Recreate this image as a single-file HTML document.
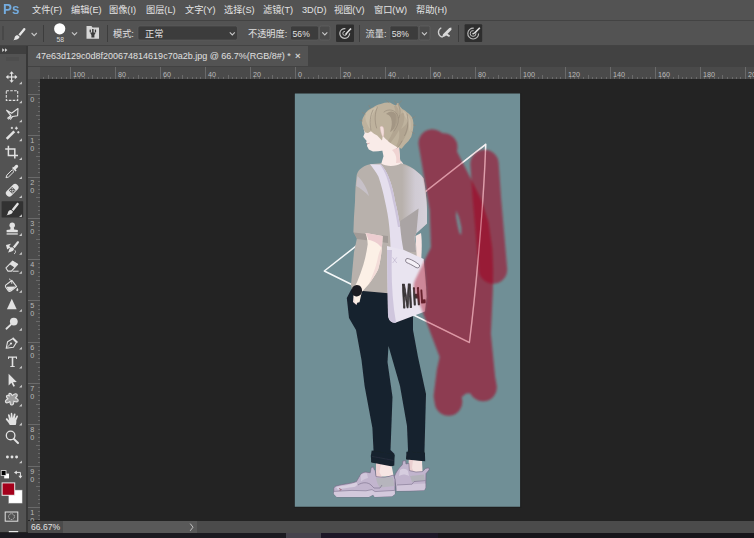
<!DOCTYPE html>
<html><head><meta charset="utf-8"><title>Ps</title>
<style>
html,body{margin:0;padding:0;}
body{width:754px;height:538px;overflow:hidden;background:#232323;position:relative;font-family:"Liberation Sans","Noto Sans CJK SC",sans-serif;}
.abs{position:absolute;}
#menubar{left:0;top:0;width:754px;height:20px;background:#535353;}
#menubar .ps{position:absolute;left:3px;top:1px;font-size:14.8px;line-height:17px;font-weight:bold;color:#74acdf;transform:scaleX(0.9);transform-origin:0 0;}
#menubar span.m{position:absolute;top:3px;font-size:9.2px;color:#e4e4e4;white-space:nowrap;line-height:14px;}
#optbar{left:0;top:20px;width:754px;height:26px;background:#535353;}
#optline{left:0;top:20px;width:754px;height:1px;background:#434343;}
#optline2{left:0;top:45px;width:754px;height:1px;background:#434343;}
.ol{position:absolute;top:7px;font-size:9.2px;line-height:14px;color:#e0e0e0;white-space:nowrap;}
#tabbar{left:0;top:46px;width:754px;height:21px;background:#424242;}
#tab{left:28px;top:46px;width:280px;height:20px;background:#535353;color:#e0e0e0;font-size:9px;line-height:20px;white-space:nowrap;}
#tools{left:0;top:46px;width:26px;height:486px;background:#535353;}
#toolhead{left:0;top:46px;width:26px;height:8px;background:#3f3f3f;}
#tsep{left:26px;top:46px;width:2px;height:486px;background:#383838;}
#status{left:28px;top:520.5px;width:726px;height:12px;background:#4b4b4b;}
#bottom{left:0;top:532.6px;width:754px;height:6px;background:#1b1a20;}
.tk{stroke:#6a6a6a;stroke-width:1;shape-rendering:crispEdges;}
.rl{font-size:7.2px;fill:#bababa;font-family:"Liberation Sans",sans-serif;}
</style></head><body>
<div id="menubar" class="abs">
<span class="ps">Ps</span>
<span class="m" style="left:32px">文件(F)</span>
<span class="m" style="left:71px">编辑(E)</span>
<span class="m" style="left:109px">图像(I)</span>
<span class="m" style="left:146px">图层(L)</span>
<span class="m" style="left:185px">文字(Y)</span>
<span class="m" style="left:224px">选择(S)</span>
<span class="m" style="left:263px">滤镜(T)</span>
<span class="m" style="left:302px">3D(D)</span>
<span class="m" style="left:334px">视图(V)</span>
<span class="m" style="left:374px">窗口(W)</span>
<span class="m" style="left:416px">帮助(H)</span>
</div>
<div id="optbar" class="abs"><!-- options bar; coordinates relative to optbar (page y = 20 + top) -->
<svg style="position:absolute;left:0;top:0" width="754" height="26" viewBox="0 20 754 26">
<!-- grip -->
<g fill="#444">
<rect x="2" y="26" width="2" height="14" fill="#484848"/>
</g>
<g stroke="#3d3d3d" stroke-width="1" shape-rendering="crispEdges">
<line x1="43.5" y1="25" x2="43.5" y2="42"/>
<line x1="107.5" y1="25" x2="107.5" y2="42"/>
<line x1="359.5" y1="25" x2="359.5" y2="42"/>
<line x1="458.5" y1="25" x2="458.5" y2="42"/>
</g>
<!-- brush icon -->
<g id="brushic" fill="#e6e6e6">
<path d="M24.8 28.2 C25.6 28.6 25.6 29.4 25.2 30 L20.2 36 L18.4 34.6 L23.4 28.6 C23.8 28.1 24.4 28 24.8 28.2 Z"/>
<path d="M17.8 35.2 L19.6 36.7 C19.3 38.4 17.6 39.6 15.6 39.8 C14.6 39.9 13.8 40.2 13.4 40.4 C14.4 39.2 14.4 38.2 14.8 37 C15.3 35.7 16.6 35 17.8 35.2 Z"/>
</g>
<!-- chevrons -->
<g fill="none" stroke="#c8c8c8" stroke-width="1.1">
<polyline points="31.6,33 34.2,35.6 36.8,33"/>
<polyline points="71.9,32.4 74.5,35 77.1,32.4"/>
<polyline points="229.8,32.4 232.3,34.9 234.8,32.4"/>
<polyline points="322.3,32.4 324.8,34.9 327.3,32.4"/>
<polyline points="421.9,32.4 424.4,34.9 426.9,32.4"/>
</g>
<!-- brush preset circle -->
<circle cx="59.7" cy="28.8" r="5.6" fill="#ffffff"/>
<text x="60.3" y="42" text-anchor="middle" font-size="6.8" fill="#d8d8d8" font-family="Liberation Sans, sans-serif">58</text>
<!-- folder/brush panel icon -->
<g>
<path d="M86.5 26 H91.5 L92.5 27.4 H99 V38.8 H86.5 Z" fill="#d6d6d6"/>
<g fill="#3a3a3a">
<rect x="92.1" y="29" width="1.5" height="5"/>
<rect x="89.6" y="29.6" width="1.3" height="2.6"/>
<rect x="94.8" y="29.6" width="1.3" height="2.6"/>
<path d="M90 32.4 L95.8 32.4 L94.4 35 L94.4 37.6 L91.4 37.6 L91.4 35 Z"/>
</g>
</g>
<!-- mode dropdown -->
<rect x="138" y="26" width="99.5" height="14" rx="2" fill="#3c3c3c" stroke="#5e5e5e" stroke-width="0.6"/>
<!-- opacity input -->
<rect x="290.5" y="26" width="28" height="14" rx="1.5" fill="#3c3c3c" stroke="#5e5e5e" stroke-width="0.6"/>
<rect x="319.6" y="26" width="10.4" height="14" rx="1.5" fill="#4a4a4a" stroke="#646464" stroke-width="0.6"/>
<!-- flow input -->
<rect x="390" y="26" width="28.4" height="14" rx="1.5" fill="#3c3c3c" stroke="#5e5e5e" stroke-width="0.6"/>
<rect x="419.2" y="26" width="10.8" height="14" rx="1.5" fill="#4a4a4a" stroke="#646464" stroke-width="0.6"/>
<!-- redraw chevrons over boxes -->
<g fill="none" stroke="#c8c8c8" stroke-width="1.1">
<polyline points="229.8,32.4 232.3,34.9 234.8,32.4"/>
<polyline points="322.3,32.4 324.8,34.9 327.3,32.4"/>
<polyline points="421.9,32.4 424.4,34.9 426.9,32.4"/>
</g>
<!-- pressure buttons -->
<rect x="336" y="24.4" width="18" height="17.6" rx="1" fill="#2e2e2e"/>
<g fill="none" stroke="#c4c4c4" stroke-width="1.2">
<path d="M349.6 33.2 A4.9 4.9 0 1 1 345.4 28.6"/>
<path d="M346.8 33.6 A2 2 0 1 1 344.9 31.4" stroke-width="1"/>
</g>
<path d="M345.4 33.4 L350.4 28 L351.6 29 L346.6 34.2 L344.8 34.8 Z" fill="#e6e6e6"/>
<rect x="464.6" y="24.2" width="17.6" height="17.8" rx="1" fill="#2e2e2e"/>
<g fill="none" stroke="#bdbdbd" stroke-width="1.1">
<path d="M478.6 33.4 A5.4 5.4 0 1 1 473.8 28.2"/>
<path d="M476 33.4 A2.9 2.9 0 1 1 473.6 30.6" stroke-width="1"/>
</g>
<circle cx="473.2" cy="33.6" r="0.9" fill="#dcdcdc"/>
<path d="M473.6 33 L479.2 27.2 L480.4 28.2 L474.8 34 Z" fill="#e6e6e6"/>
<!-- airbrush icon -->
<path d="M441.3 27.8 C437.4 30 437.4 35 441.9 37.2" fill="none" stroke="#cfcfcf" stroke-width="1.3"/>
<path d="M451.3 27.5 L451.5 29.8 L445.2 36.3 L443.2 36.9 L442.4 37.8 L441.6 37 L442.5 36 L443 34.3 L449.3 27.9 Z" fill="#dadada"/>
<path d="M446.6 33.2 L450 35.4 L449.2 37 L445.2 35 Z" fill="#dadada"/>
</svg>
<span class="ol" style="left:113px">模式:</span>
<span class="ol" style="left:145px">正常</span>
<span class="ol" style="left:248px">不透明度:</span>
<span class="ol" style="left:292.6px;font-size:8.6px">56%</span>
<span class="ol" style="left:365.6px">流量:</span>
<span class="ol" style="left:391.8px;font-size:8.6px">58%</span>
</div>
<div id="optline" class="abs"></div><div id="optline2" class="abs"></div>
<div id="tabbar" class="abs"></div>
<div id="tab" class="abs"><span style="position:absolute;left:8px">47e63d129c0d8f200674814619c70a2b.jpg @ 66.7%(RGB/8#) *</span><span style="position:absolute;left:267px;font-size:9.5px;font-weight:bold;color:#d0d0d0">×</span></div>
<div id="tools" class="abs"></div>
<div id="toolhead" class="abs"></div>
<div id="tsep" class="abs"></div>
<svg class="abs" style="left:0;top:0" width="754" height="538" viewBox="0 0 754 538">
<rect x="28" y="67" width="726" height="12" fill="#4a4a4a"/>
<rect x="28" y="67" width="12" height="453" fill="#4a4a4a"/>
<rect x="28" y="67" width="12" height="12" fill="#535353"/>
<rect x="40" y="79" width="714" height="441" fill="#232323"/>
<line x1="43.5" y1="77" x2="43.5" y2="79" class="tk"/>
<line x1="48.5" y1="75" x2="48.5" y2="79" class="tk"/>
<line x1="52.5" y1="77" x2="52.5" y2="79" class="tk"/>
<line x1="56.5" y1="77" x2="56.5" y2="79" class="tk"/>
<line x1="61.5" y1="77" x2="61.5" y2="79" class="tk"/>
<line x1="66.5" y1="77" x2="66.5" y2="79" class="tk"/>
<line x1="70.5" y1="67" x2="70.5" y2="79" class="tk"/>
<text x="73.0" y="76.5" class="rl">100</text>
<line x1="74.5" y1="77" x2="74.5" y2="79" class="tk"/>
<line x1="79.5" y1="77" x2="79.5" y2="79" class="tk"/>
<line x1="84.5" y1="77" x2="84.5" y2="79" class="tk"/>
<line x1="88.5" y1="77" x2="88.5" y2="79" class="tk"/>
<line x1="92.5" y1="75" x2="92.5" y2="79" class="tk"/>
<line x1="97.5" y1="77" x2="97.5" y2="79" class="tk"/>
<line x1="102.5" y1="77" x2="102.5" y2="79" class="tk"/>
<line x1="106.5" y1="77" x2="106.5" y2="79" class="tk"/>
<line x1="110.5" y1="77" x2="110.5" y2="79" class="tk"/>
<line x1="115.5" y1="67" x2="115.5" y2="79" class="tk"/>
<text x="118.0" y="76.5" class="rl">80</text>
<line x1="120.5" y1="77" x2="120.5" y2="79" class="tk"/>
<line x1="124.5" y1="77" x2="124.5" y2="79" class="tk"/>
<line x1="128.5" y1="77" x2="128.5" y2="79" class="tk"/>
<line x1="133.5" y1="77" x2="133.5" y2="79" class="tk"/>
<line x1="138.5" y1="75" x2="138.5" y2="79" class="tk"/>
<line x1="142.5" y1="77" x2="142.5" y2="79" class="tk"/>
<line x1="146.5" y1="77" x2="146.5" y2="79" class="tk"/>
<line x1="151.5" y1="77" x2="151.5" y2="79" class="tk"/>
<line x1="156.5" y1="77" x2="156.5" y2="79" class="tk"/>
<line x1="160.5" y1="67" x2="160.5" y2="79" class="tk"/>
<text x="163.0" y="76.5" class="rl">60</text>
<line x1="164.5" y1="77" x2="164.5" y2="79" class="tk"/>
<line x1="169.5" y1="77" x2="169.5" y2="79" class="tk"/>
<line x1="174.5" y1="77" x2="174.5" y2="79" class="tk"/>
<line x1="178.5" y1="77" x2="178.5" y2="79" class="tk"/>
<line x1="182.5" y1="75" x2="182.5" y2="79" class="tk"/>
<line x1="187.5" y1="77" x2="187.5" y2="79" class="tk"/>
<line x1="192.5" y1="77" x2="192.5" y2="79" class="tk"/>
<line x1="196.5" y1="77" x2="196.5" y2="79" class="tk"/>
<line x1="200.5" y1="77" x2="200.5" y2="79" class="tk"/>
<line x1="205.5" y1="67" x2="205.5" y2="79" class="tk"/>
<text x="208.0" y="76.5" class="rl">40</text>
<line x1="210.5" y1="77" x2="210.5" y2="79" class="tk"/>
<line x1="214.5" y1="77" x2="214.5" y2="79" class="tk"/>
<line x1="218.5" y1="77" x2="218.5" y2="79" class="tk"/>
<line x1="223.5" y1="77" x2="223.5" y2="79" class="tk"/>
<line x1="228.5" y1="75" x2="228.5" y2="79" class="tk"/>
<line x1="232.5" y1="77" x2="232.5" y2="79" class="tk"/>
<line x1="236.5" y1="77" x2="236.5" y2="79" class="tk"/>
<line x1="241.5" y1="77" x2="241.5" y2="79" class="tk"/>
<line x1="246.5" y1="77" x2="246.5" y2="79" class="tk"/>
<line x1="250.5" y1="67" x2="250.5" y2="79" class="tk"/>
<text x="253.0" y="76.5" class="rl">20</text>
<line x1="254.5" y1="77" x2="254.5" y2="79" class="tk"/>
<line x1="259.5" y1="77" x2="259.5" y2="79" class="tk"/>
<line x1="264.5" y1="77" x2="264.5" y2="79" class="tk"/>
<line x1="268.5" y1="77" x2="268.5" y2="79" class="tk"/>
<line x1="272.5" y1="75" x2="272.5" y2="79" class="tk"/>
<line x1="277.5" y1="77" x2="277.5" y2="79" class="tk"/>
<line x1="282.5" y1="77" x2="282.5" y2="79" class="tk"/>
<line x1="286.5" y1="77" x2="286.5" y2="79" class="tk"/>
<line x1="290.5" y1="77" x2="290.5" y2="79" class="tk"/>
<line x1="295.5" y1="67" x2="295.5" y2="79" class="tk"/>
<text x="298.0" y="76.5" class="rl">0</text>
<line x1="300.5" y1="77" x2="300.5" y2="79" class="tk"/>
<line x1="304.5" y1="77" x2="304.5" y2="79" class="tk"/>
<line x1="308.5" y1="77" x2="308.5" y2="79" class="tk"/>
<line x1="313.5" y1="77" x2="313.5" y2="79" class="tk"/>
<line x1="318.5" y1="75" x2="318.5" y2="79" class="tk"/>
<line x1="322.5" y1="77" x2="322.5" y2="79" class="tk"/>
<line x1="326.5" y1="77" x2="326.5" y2="79" class="tk"/>
<line x1="331.5" y1="77" x2="331.5" y2="79" class="tk"/>
<line x1="336.5" y1="77" x2="336.5" y2="79" class="tk"/>
<line x1="340.5" y1="67" x2="340.5" y2="79" class="tk"/>
<text x="343.0" y="76.5" class="rl">20</text>
<line x1="344.5" y1="77" x2="344.5" y2="79" class="tk"/>
<line x1="349.5" y1="77" x2="349.5" y2="79" class="tk"/>
<line x1="354.5" y1="77" x2="354.5" y2="79" class="tk"/>
<line x1="358.5" y1="77" x2="358.5" y2="79" class="tk"/>
<line x1="362.5" y1="75" x2="362.5" y2="79" class="tk"/>
<line x1="367.5" y1="77" x2="367.5" y2="79" class="tk"/>
<line x1="372.5" y1="77" x2="372.5" y2="79" class="tk"/>
<line x1="376.5" y1="77" x2="376.5" y2="79" class="tk"/>
<line x1="380.5" y1="77" x2="380.5" y2="79" class="tk"/>
<line x1="385.5" y1="67" x2="385.5" y2="79" class="tk"/>
<text x="388.0" y="76.5" class="rl">40</text>
<line x1="390.5" y1="77" x2="390.5" y2="79" class="tk"/>
<line x1="394.5" y1="77" x2="394.5" y2="79" class="tk"/>
<line x1="398.5" y1="77" x2="398.5" y2="79" class="tk"/>
<line x1="403.5" y1="77" x2="403.5" y2="79" class="tk"/>
<line x1="408.5" y1="75" x2="408.5" y2="79" class="tk"/>
<line x1="412.5" y1="77" x2="412.5" y2="79" class="tk"/>
<line x1="416.5" y1="77" x2="416.5" y2="79" class="tk"/>
<line x1="421.5" y1="77" x2="421.5" y2="79" class="tk"/>
<line x1="426.5" y1="77" x2="426.5" y2="79" class="tk"/>
<line x1="430.5" y1="67" x2="430.5" y2="79" class="tk"/>
<text x="433.0" y="76.5" class="rl">60</text>
<line x1="434.5" y1="77" x2="434.5" y2="79" class="tk"/>
<line x1="439.5" y1="77" x2="439.5" y2="79" class="tk"/>
<line x1="444.5" y1="77" x2="444.5" y2="79" class="tk"/>
<line x1="448.5" y1="77" x2="448.5" y2="79" class="tk"/>
<line x1="452.5" y1="75" x2="452.5" y2="79" class="tk"/>
<line x1="457.5" y1="77" x2="457.5" y2="79" class="tk"/>
<line x1="462.5" y1="77" x2="462.5" y2="79" class="tk"/>
<line x1="466.5" y1="77" x2="466.5" y2="79" class="tk"/>
<line x1="470.5" y1="77" x2="470.5" y2="79" class="tk"/>
<line x1="475.5" y1="67" x2="475.5" y2="79" class="tk"/>
<text x="478.0" y="76.5" class="rl">80</text>
<line x1="480.5" y1="77" x2="480.5" y2="79" class="tk"/>
<line x1="484.5" y1="77" x2="484.5" y2="79" class="tk"/>
<line x1="488.5" y1="77" x2="488.5" y2="79" class="tk"/>
<line x1="493.5" y1="77" x2="493.5" y2="79" class="tk"/>
<line x1="498.5" y1="75" x2="498.5" y2="79" class="tk"/>
<line x1="502.5" y1="77" x2="502.5" y2="79" class="tk"/>
<line x1="506.5" y1="77" x2="506.5" y2="79" class="tk"/>
<line x1="511.5" y1="77" x2="511.5" y2="79" class="tk"/>
<line x1="516.5" y1="77" x2="516.5" y2="79" class="tk"/>
<line x1="520.5" y1="67" x2="520.5" y2="79" class="tk"/>
<text x="523.0" y="76.5" class="rl">100</text>
<line x1="524.5" y1="77" x2="524.5" y2="79" class="tk"/>
<line x1="529.5" y1="77" x2="529.5" y2="79" class="tk"/>
<line x1="534.5" y1="77" x2="534.5" y2="79" class="tk"/>
<line x1="538.5" y1="77" x2="538.5" y2="79" class="tk"/>
<line x1="542.5" y1="75" x2="542.5" y2="79" class="tk"/>
<line x1="547.5" y1="77" x2="547.5" y2="79" class="tk"/>
<line x1="552.5" y1="77" x2="552.5" y2="79" class="tk"/>
<line x1="556.5" y1="77" x2="556.5" y2="79" class="tk"/>
<line x1="560.5" y1="77" x2="560.5" y2="79" class="tk"/>
<line x1="565.5" y1="67" x2="565.5" y2="79" class="tk"/>
<text x="568.0" y="76.5" class="rl">120</text>
<line x1="570.5" y1="77" x2="570.5" y2="79" class="tk"/>
<line x1="574.5" y1="77" x2="574.5" y2="79" class="tk"/>
<line x1="578.5" y1="77" x2="578.5" y2="79" class="tk"/>
<line x1="583.5" y1="77" x2="583.5" y2="79" class="tk"/>
<line x1="588.5" y1="75" x2="588.5" y2="79" class="tk"/>
<line x1="592.5" y1="77" x2="592.5" y2="79" class="tk"/>
<line x1="596.5" y1="77" x2="596.5" y2="79" class="tk"/>
<line x1="601.5" y1="77" x2="601.5" y2="79" class="tk"/>
<line x1="606.5" y1="77" x2="606.5" y2="79" class="tk"/>
<line x1="610.5" y1="67" x2="610.5" y2="79" class="tk"/>
<text x="613.0" y="76.5" class="rl">140</text>
<line x1="614.5" y1="77" x2="614.5" y2="79" class="tk"/>
<line x1="619.5" y1="77" x2="619.5" y2="79" class="tk"/>
<line x1="624.5" y1="77" x2="624.5" y2="79" class="tk"/>
<line x1="628.5" y1="77" x2="628.5" y2="79" class="tk"/>
<line x1="632.5" y1="75" x2="632.5" y2="79" class="tk"/>
<line x1="637.5" y1="77" x2="637.5" y2="79" class="tk"/>
<line x1="642.5" y1="77" x2="642.5" y2="79" class="tk"/>
<line x1="646.5" y1="77" x2="646.5" y2="79" class="tk"/>
<line x1="650.5" y1="77" x2="650.5" y2="79" class="tk"/>
<line x1="655.5" y1="67" x2="655.5" y2="79" class="tk"/>
<text x="658.0" y="76.5" class="rl">160</text>
<line x1="660.5" y1="77" x2="660.5" y2="79" class="tk"/>
<line x1="664.5" y1="77" x2="664.5" y2="79" class="tk"/>
<line x1="668.5" y1="77" x2="668.5" y2="79" class="tk"/>
<line x1="673.5" y1="77" x2="673.5" y2="79" class="tk"/>
<line x1="678.5" y1="75" x2="678.5" y2="79" class="tk"/>
<line x1="682.5" y1="77" x2="682.5" y2="79" class="tk"/>
<line x1="686.5" y1="77" x2="686.5" y2="79" class="tk"/>
<line x1="691.5" y1="77" x2="691.5" y2="79" class="tk"/>
<line x1="696.5" y1="77" x2="696.5" y2="79" class="tk"/>
<line x1="700.5" y1="67" x2="700.5" y2="79" class="tk"/>
<text x="703.0" y="76.5" class="rl">180</text>
<line x1="704.5" y1="77" x2="704.5" y2="79" class="tk"/>
<line x1="709.5" y1="77" x2="709.5" y2="79" class="tk"/>
<line x1="714.5" y1="77" x2="714.5" y2="79" class="tk"/>
<line x1="718.5" y1="77" x2="718.5" y2="79" class="tk"/>
<line x1="722.5" y1="75" x2="722.5" y2="79" class="tk"/>
<line x1="727.5" y1="77" x2="727.5" y2="79" class="tk"/>
<line x1="732.5" y1="77" x2="732.5" y2="79" class="tk"/>
<line x1="736.5" y1="77" x2="736.5" y2="79" class="tk"/>
<line x1="740.5" y1="77" x2="740.5" y2="79" class="tk"/>
<line x1="745.5" y1="67" x2="745.5" y2="79" class="tk"/>
<text x="748.0" y="76.5" class="rl">200</text>
<line x1="750.5" y1="77" x2="750.5" y2="79" class="tk"/>
<line x1="754.5" y1="77" x2="754.5" y2="79" class="tk"/>
<line x1="38" y1="82.5" x2="40" y2="82.5" class="tk"/>
<line x1="38" y1="86.5" x2="40" y2="86.5" class="tk"/>
<line x1="38" y1="90.5" x2="40" y2="90.5" class="tk"/>
<line x1="28" y1="94.5" x2="40" y2="94.5" class="tk"/>
<text x="30.2" y="102.4" class="rl">0</text>
<line x1="38" y1="98.5" x2="40" y2="98.5" class="tk"/>
<line x1="38" y1="102.5" x2="40" y2="102.5" class="tk"/>
<line x1="38" y1="106.5" x2="40" y2="106.5" class="tk"/>
<line x1="38" y1="111.5" x2="40" y2="111.5" class="tk"/>
<line x1="36" y1="115.5" x2="40" y2="115.5" class="tk"/>
<line x1="38" y1="119.5" x2="40" y2="119.5" class="tk"/>
<line x1="38" y1="123.5" x2="40" y2="123.5" class="tk"/>
<line x1="38" y1="127.5" x2="40" y2="127.5" class="tk"/>
<line x1="38" y1="131.5" x2="40" y2="131.5" class="tk"/>
<line x1="28" y1="135.5" x2="40" y2="135.5" class="tk"/>
<text x="30.2" y="143.4" class="rl">1</text>
<text x="30.2" y="150.6" class="rl">0</text>
<line x1="38" y1="139.5" x2="40" y2="139.5" class="tk"/>
<line x1="38" y1="144.5" x2="40" y2="144.5" class="tk"/>
<line x1="38" y1="148.5" x2="40" y2="148.5" class="tk"/>
<line x1="38" y1="152.5" x2="40" y2="152.5" class="tk"/>
<line x1="36" y1="156.5" x2="40" y2="156.5" class="tk"/>
<line x1="38" y1="160.5" x2="40" y2="160.5" class="tk"/>
<line x1="38" y1="164.5" x2="40" y2="164.5" class="tk"/>
<line x1="38" y1="168.5" x2="40" y2="168.5" class="tk"/>
<line x1="38" y1="172.5" x2="40" y2="172.5" class="tk"/>
<line x1="28" y1="177.5" x2="40" y2="177.5" class="tk"/>
<text x="30.2" y="185.4" class="rl">2</text>
<text x="30.2" y="192.6" class="rl">0</text>
<line x1="38" y1="181.5" x2="40" y2="181.5" class="tk"/>
<line x1="38" y1="185.5" x2="40" y2="185.5" class="tk"/>
<line x1="38" y1="189.5" x2="40" y2="189.5" class="tk"/>
<line x1="38" y1="193.5" x2="40" y2="193.5" class="tk"/>
<line x1="36" y1="197.5" x2="40" y2="197.5" class="tk"/>
<line x1="38" y1="201.5" x2="40" y2="201.5" class="tk"/>
<line x1="38" y1="206.5" x2="40" y2="206.5" class="tk"/>
<line x1="38" y1="210.5" x2="40" y2="210.5" class="tk"/>
<line x1="38" y1="214.5" x2="40" y2="214.5" class="tk"/>
<line x1="28" y1="218.5" x2="40" y2="218.5" class="tk"/>
<text x="30.2" y="226.4" class="rl">3</text>
<text x="30.2" y="233.6" class="rl">0</text>
<line x1="38" y1="222.5" x2="40" y2="222.5" class="tk"/>
<line x1="38" y1="226.5" x2="40" y2="226.5" class="tk"/>
<line x1="38" y1="230.5" x2="40" y2="230.5" class="tk"/>
<line x1="38" y1="234.5" x2="40" y2="234.5" class="tk"/>
<line x1="36" y1="239.5" x2="40" y2="239.5" class="tk"/>
<line x1="38" y1="243.5" x2="40" y2="243.5" class="tk"/>
<line x1="38" y1="247.5" x2="40" y2="247.5" class="tk"/>
<line x1="38" y1="251.5" x2="40" y2="251.5" class="tk"/>
<line x1="38" y1="255.5" x2="40" y2="255.5" class="tk"/>
<line x1="28" y1="259.5" x2="40" y2="259.5" class="tk"/>
<text x="30.2" y="267.4" class="rl">4</text>
<text x="30.2" y="274.59999999999997" class="rl">0</text>
<line x1="38" y1="263.5" x2="40" y2="263.5" class="tk"/>
<line x1="38" y1="267.5" x2="40" y2="267.5" class="tk"/>
<line x1="38" y1="272.5" x2="40" y2="272.5" class="tk"/>
<line x1="38" y1="276.5" x2="40" y2="276.5" class="tk"/>
<line x1="36" y1="280.5" x2="40" y2="280.5" class="tk"/>
<line x1="38" y1="284.5" x2="40" y2="284.5" class="tk"/>
<line x1="38" y1="288.5" x2="40" y2="288.5" class="tk"/>
<line x1="38" y1="292.5" x2="40" y2="292.5" class="tk"/>
<line x1="38" y1="296.5" x2="40" y2="296.5" class="tk"/>
<line x1="28" y1="300.5" x2="40" y2="300.5" class="tk"/>
<text x="30.2" y="308.4" class="rl">5</text>
<text x="30.2" y="315.59999999999997" class="rl">0</text>
<line x1="38" y1="305.5" x2="40" y2="305.5" class="tk"/>
<line x1="38" y1="309.5" x2="40" y2="309.5" class="tk"/>
<line x1="38" y1="313.5" x2="40" y2="313.5" class="tk"/>
<line x1="38" y1="317.5" x2="40" y2="317.5" class="tk"/>
<line x1="36" y1="321.5" x2="40" y2="321.5" class="tk"/>
<line x1="38" y1="325.5" x2="40" y2="325.5" class="tk"/>
<line x1="38" y1="329.5" x2="40" y2="329.5" class="tk"/>
<line x1="38" y1="334.5" x2="40" y2="334.5" class="tk"/>
<line x1="38" y1="338.5" x2="40" y2="338.5" class="tk"/>
<line x1="28" y1="342.5" x2="40" y2="342.5" class="tk"/>
<text x="30.2" y="350.4" class="rl">6</text>
<text x="30.2" y="357.59999999999997" class="rl">0</text>
<line x1="38" y1="346.5" x2="40" y2="346.5" class="tk"/>
<line x1="38" y1="350.5" x2="40" y2="350.5" class="tk"/>
<line x1="38" y1="354.5" x2="40" y2="354.5" class="tk"/>
<line x1="38" y1="358.5" x2="40" y2="358.5" class="tk"/>
<line x1="36" y1="362.5" x2="40" y2="362.5" class="tk"/>
<line x1="38" y1="367.5" x2="40" y2="367.5" class="tk"/>
<line x1="38" y1="371.5" x2="40" y2="371.5" class="tk"/>
<line x1="38" y1="375.5" x2="40" y2="375.5" class="tk"/>
<line x1="38" y1="379.5" x2="40" y2="379.5" class="tk"/>
<line x1="28" y1="383.5" x2="40" y2="383.5" class="tk"/>
<text x="30.2" y="391.4" class="rl">7</text>
<text x="30.2" y="398.59999999999997" class="rl">0</text>
<line x1="38" y1="387.5" x2="40" y2="387.5" class="tk"/>
<line x1="38" y1="391.5" x2="40" y2="391.5" class="tk"/>
<line x1="38" y1="395.5" x2="40" y2="395.5" class="tk"/>
<line x1="38" y1="400.5" x2="40" y2="400.5" class="tk"/>
<line x1="36" y1="404.5" x2="40" y2="404.5" class="tk"/>
<line x1="38" y1="408.5" x2="40" y2="408.5" class="tk"/>
<line x1="38" y1="412.5" x2="40" y2="412.5" class="tk"/>
<line x1="38" y1="416.5" x2="40" y2="416.5" class="tk"/>
<line x1="38" y1="420.5" x2="40" y2="420.5" class="tk"/>
<line x1="28" y1="424.5" x2="40" y2="424.5" class="tk"/>
<text x="30.2" y="432.4" class="rl">8</text>
<text x="30.2" y="439.59999999999997" class="rl">0</text>
<line x1="38" y1="429.5" x2="40" y2="429.5" class="tk"/>
<line x1="38" y1="433.5" x2="40" y2="433.5" class="tk"/>
<line x1="38" y1="437.5" x2="40" y2="437.5" class="tk"/>
<line x1="38" y1="441.5" x2="40" y2="441.5" class="tk"/>
<line x1="36" y1="445.5" x2="40" y2="445.5" class="tk"/>
<line x1="38" y1="449.5" x2="40" y2="449.5" class="tk"/>
<line x1="38" y1="453.5" x2="40" y2="453.5" class="tk"/>
<line x1="38" y1="457.5" x2="40" y2="457.5" class="tk"/>
<line x1="38" y1="462.5" x2="40" y2="462.5" class="tk"/>
<line x1="28" y1="466.5" x2="40" y2="466.5" class="tk"/>
<text x="30.2" y="474.4" class="rl">9</text>
<text x="30.2" y="481.59999999999997" class="rl">0</text>
<line x1="38" y1="470.5" x2="40" y2="470.5" class="tk"/>
<line x1="38" y1="474.5" x2="40" y2="474.5" class="tk"/>
<line x1="38" y1="478.5" x2="40" y2="478.5" class="tk"/>
<line x1="38" y1="482.5" x2="40" y2="482.5" class="tk"/>
<line x1="36" y1="486.5" x2="40" y2="486.5" class="tk"/>
<line x1="38" y1="490.5" x2="40" y2="490.5" class="tk"/>
<line x1="38" y1="495.5" x2="40" y2="495.5" class="tk"/>
<line x1="38" y1="499.5" x2="40" y2="499.5" class="tk"/>
<line x1="38" y1="503.5" x2="40" y2="503.5" class="tk"/>
<line x1="28" y1="507.5" x2="40" y2="507.5" class="tk"/>
<text x="30.2" y="515.4" class="rl">1</text>
<text x="30.2" y="522.6" class="rl">0</text>
<text x="30.2" y="529.8" class="rl">0</text>
<line x1="38" y1="511.5" x2="40" y2="511.5" class="tk"/>
<line x1="38" y1="515.5" x2="40" y2="515.5" class="tk"/>
<line x1="38" y1="519.5" x2="40" y2="519.5" class="tk"/>
<defs>
<clipPath id="imgclip"><rect x="294.8" y="93.6" width="225.3" height="413.2"/></clipPath>
<filter id="soft" filterUnits="userSpaceOnUse" x="290" y="90" width="240" height="425"><feGaussianBlur stdDeviation="1.1"/></filter>
<filter id="soft2" filterUnits="userSpaceOnUse" x="290" y="90" width="240" height="425"><feGaussianBlur stdDeviation="0.45"/></filter>
<mask id="slit" maskUnits="userSpaceOnUse" x="295" y="94" width="225" height="413"><rect x="295" y="94" width="225" height="413" fill="#fff"/><path d="M456.3 210.5 L459.2 218 L461.4 228 L461.2 235 L459.3 233 L457.3 224 L455.9 216 Z" fill="#000"/><path d="M387 246 L404 250 L424.2 259 C425.5 272 426.7 285 427.1 297 L425.5 312 L396 323 C391 324 388.5 320 388 314.8 Z" fill="#000" fill-opacity="0.3"/></mask>
<linearGradient id="shl" gradientUnits="userSpaceOnUse" x1="402" y1="0" x2="426" y2="0"><stop offset="0" stop-color="#d3ced8" stop-opacity="0"/><stop offset="0.55" stop-color="#d3ced8" stop-opacity="0.9"/><stop offset="1" stop-color="#d6d1da" stop-opacity="1"/></linearGradient>
</defs>
<rect x="294" y="93" width="227.4" height="415" fill="#1e1e1e"/>
<g clip-path="url(#imgclip)">
<rect x="294" y="93" width="227" height="415" fill="#708f96"/>
<!-- triangle -->
<path d="M324.3 271 L485.7 144.3 C484 200 476 290 469.4 342.5 Z" fill="none" stroke="#f6f8f9" stroke-width="1.5" stroke-linejoin="round"/>
<g filter="url(#soft2)">
<!-- pants -->
<path d="M352 288 C372 289 400 292 413 300 L413 330 L418 357 L426 394 L424.5 450 L424.6 461 L406 459 L408 450 L407 426 L400 386 L388.5 346 L387.5 362 L392.5 397 L390.5 450 L394.5 454 L393 466 L371 462 L373.5 450 L372.4 428 L364.6 386 L361.5 360 L356 330 L349 318 L346.8 298 Z" fill="#18212d"/>
<path d="M353.5 296 L359 298 L356.5 305 L353 302 Z" fill="#f3e0de"/>
<!-- ankles -->
<path d="M376 462 L391.4 464.8 L393.6 476 L376 477 Z" fill="#f6e6e4"/>
<path d="M376 463 L381 464 L379.4 472 L382 477 L376 477 Z" fill="#ecd0d2"/>
<path d="M408.9 459 L422 461 L422.6 472.4 L408.6 472 Z" fill="#f4e2e1"/>
<path d="M408.9 459 L413 460 L412 468 L414 472 L408.6 472 Z" fill="#eaced0"/>
<!-- right shoe (behind) -->
<path d="M394.3 476.5 C396 472 399 468 402.3 464.8 L402.8 461 L405.6 460.6 L406 464 L408.9 463.3 L409.4 470.6 L416 472 L422.4 471.6 L425.7 468.4 L428.8 467.8 L429.2 469.8 L426 473.6 L425.7 488.1 L424.2 490.3 L410 491 L396.5 491 Z" fill="#c1b4cd" stroke="#6f6480" stroke-width="0.6" stroke-linejoin="round"/>
<path d="M400 470 C403 468 406 468.4 408 471 L409 476 C405 474 402 474 399 476 Z" fill="#d6cddf"/>
<path d="M410 476 L424 474.6 L425 480 L412 482 Z" fill="#b3b2ba"/>
<path d="M397 485 L425.4 483.4 L425.4 488 L424.2 490.3 L396.5 491 Z" fill="#d1c6da"/>
<path d="M397 485 L412 484.2 L414 481.6 L425.4 480.6" fill="none" stroke="#6f6480" stroke-width="0.5"/>
<!-- left shoe -->
<path d="M333.8 488.1 C334.4 487 335 486.4 336 486 C339.6 485 343 484.4 346.9 483.8 C350.4 483.4 353.6 482.6 356.4 481.6 C358 479 359.4 476.4 360.7 474.3 C362.2 472.8 364 472.2 365.8 472.1 L370.2 472.8 L371.2 467.4 L373.6 467 L374 469.4 L375.3 470.6 L376 476.6 L385 477.6 L393.6 475 L395 479.4 L395 494 L392.1 496.2 L374.6 496.9 L373.1 494.7 L368.8 496.9 L336.7 496.9 L333.8 494 Z" fill="#c2b5ce" stroke="#6f6480" stroke-width="0.6" stroke-linejoin="round"/>
<path d="M336 487 C342 485.4 350 485 356.4 482.4 C358 484 357 486 354 487 C348 488 342 488 338 490 Z" fill="#d8cfe0"/>
<path d="M360.7 475 C362.6 473.4 365 473 367 473.4 L368 478 C365.6 478.6 363 479.6 361 481.4 Z" fill="#d2c8dc"/>
<path d="M376 478 L393 477 L394.4 486 L380 487.6 C378 485 376.6 481.6 376 478 Z" fill="#b6b5bd"/>
<path d="M358 485 C362 482 368 482 371 485 L374 488 L380 488 L382 485" fill="none" stroke="#6f6480" stroke-width="0.55"/>
<path d="M334 491.4 L352 490.4 L366 490.8 L372 489.6 L375 491.6 L394.6 490.4 L395 494 L392.1 496.2 L374.6 496.9 L373.1 494.7 L368.8 496.9 L336.7 496.9 L333.8 494 Z" fill="#d3c9dc"/>
<path d="M334 491.4 L352 490.4 L366 490.8 L372 489.6 L375 491.6 L394.6 490.4" fill="none" stroke="#6f6480" stroke-width="0.5"/>
<path d="M339 488.4 L341.4 489.6 L339.6 490.4" fill="none" stroke="#8b4a5a" stroke-width="0.6"/>
<!-- cuffs -->
<path d="M371.7 450.4 L392.4 454 L394.6 455 L394.3 465.5 L391 466.2 L371.4 462.4 L370.8 456 Z" fill="#18212d"/>
<path d="M372 456.4 L393.6 460.4" stroke="#2b3644" stroke-width="0.6" fill="none"/>
<path d="M406.4 451.7 L424.9 452.6 L425.2 461.2 L406.2 459.6 Z" fill="#18212d"/>
<!-- neck / face -->
<path d="M381 144 L383.5 156.3 L381.4 163.3 L377 166.5 L405 166.5 L402.3 162.6 L400.2 160.5 L398.8 142 Z" fill="#f9ebe8"/>
<path d="M392 150 L398.8 147 L400.2 160.5 L402.3 162.6 L396 163 C397 158 396 154 392 150 Z" fill="#efd3d2"/>
<path d="M363.6 128 L364.6 133.3 L363.2 136.8 L365.2 139.2 L366.7 141 L366 142.6 L367.4 143.8 L367 146 L368.8 149.4 L373 151.5 L378 151.2 L383.5 150.5 L392 146 L384 128 Z" fill="#f9ebe8"/>
<path d="M367 143.8 L369.6 143.2" stroke="#c98f93" stroke-width="0.6" fill="none"/>
<!-- shirt -->
<path d="M381 163.3 C386 166.8 396 166.8 401 163.3 C408 165 413 168 417 171.7 C420 174 422 176 423.6 178.4 C425.5 188 426.6 199 427 210 L427 223.6 L416 233.6 L414.5 237 L417 250 L419 296 L352 290 L351 285 L354 252 L357 238 L353.4 232 C353.6 222 354.2 212 355 201.8 C355.2 192 355.6 183 356.7 175 C357.6 172 358.6 170.4 360 169.2 C363 166.6 366 165 370 164.2 Z" fill="#b8b1ac"/>
<path d="M401 165 C408 165.6 413 168 417 171.7 C420 174 422 176 423.6 178.4 C425.5 188 426.6 199 427 210 L427 223.6 L416 233.6 L414.5 237 L416 250 L402 250 Z" fill="url(#shl)"/>
<path d="M400.2 221 L418.6 208.5 L416.4 233 L414.5 237 L416 252 L403 252 L400.2 236 Z" fill="#aaa4a4"/>
<path d="M357.5 176 C362 180 367 188 369 196 C365 192 360 188 356.2 186 Z" fill="#cbc6d0" opacity="0.8"/>
<!-- shirt shadow under sleeve -->
<path d="M353.5 232.4 L388 236 L388 243 L357 239 Z" fill="#a29b97"/>
<!-- left arm -->
<path d="M365.5 233 L382.6 236 C382.4 242 382 248 381.1 254.7 C380.4 260 379.4 265 378.1 269.6 C375.4 275 372 280 368.5 284.5 L361.8 291.9 L359.5 302.3 L355.5 303 L353.6 296 L354.3 287.5 L357.3 281.5 C359.6 276 361.6 270.6 363.3 265.1 C365.4 258 366.8 251 367.7 244.3 C367.6 240 366.6 236 365.5 233 Z" fill="#fcf0e6"/>
<path d="M365.5 233 L382.6 236 C382.4 240 382.2 244 381.8 248 C379 244 374 240.6 368.4 240 C367.8 237.4 366.6 235 365.5 233 Z" fill="#eccdd0"/>
<path d="M381.8 248 C381.4 255 380 263 378.1 269.6 C375.4 275 372 280 368.5 284.5 C372 277 375.6 268 377.4 260 C378.4 255 379.6 250 381.8 248 Z" fill="#f3dcd8"/>
<!-- right arm -->
<path d="M415.5 236 L421 233 C422 240 422 250 421 262 L417 262 Z" fill="#f6e4e2"/>
<!-- watch -->
<path d="M352.4 287.6 C354 285 357 284.4 359.4 285.6 C361.6 287 362.6 290 361.8 292.6 C361 295.4 358.6 296.8 356 296.4 C353.4 296 351.8 293.8 351.8 291 C351.8 289.8 352 288.6 352.4 287.6 Z" fill="#1b1b20"/>
<!-- strap -->
<path d="M370 164.2 L381 164.6 C384 168 386.6 172 388.5 176.7 C391.6 184 393.8 193 395.2 201.8 C397.4 210 399 219 400.2 227 C401 235 402 243 403.4 250 L411.5 257 L388 262 L390.6 250 C390.4 242 390 234 389.3 227 C388.4 218 387 210 385.1 201.8 C383.4 193 381.2 184.6 378.5 176.7 C376 172 373.2 168 370 164.2 Z" fill="#e5dfee"/>
<path d="M381 164.6 C384 168 386.6 172 388.5 176.7 C391.6 184 393.8 193 395.2 201.8 C397.4 210 399 219 400.2 227 L398 227 C396.6 219 395 210 393 201.8 C391.4 193 389.2 184.6 386.5 176.7 C384.6 172 382.6 168 380 164.6 Z" fill="#cdc4db"/>
<!-- bag -->
<path d="M387 246 L404 250 L423.7 259 C425 272 426.2 285 426.6 297 L425 311.5 L396 322.5 C391 323.5 388.5 320 388 314.8 Z" fill="#e9e4f0"/>
<path d="M387 250 L392 250 C391 275 392 300 396 322.5 C391 323.5 388.5 320 388 314.8 Z" fill="#cfc6dd"/>
<!-- bag handle slot -->
<path d="M407 258.5 C410 258.5 416 262 419.5 265 C420 267.5 418 268.5 416 267.5 C412 265 409 263.5 406.5 262.5 C405 261 405.5 258.8 407 258.5 Z" fill="#f4f0f7" stroke="#5a5260" stroke-width="0.7"/>
<!-- MHL -->
<g font-family="Liberation Sans, sans-serif" font-weight="bold" fill="#3a3537" stroke="#3a3537" stroke-width="1.5" stroke-linejoin="round">
<text transform="translate(402.8 307.6) rotate(-3) scale(0.35 1)" font-size="33" vector-effect="non-scaling-stroke">M</text>
<text transform="translate(413.5 304.6) rotate(-3) scale(0.39 1)" font-size="23.5" vector-effect="non-scaling-stroke">H</text>
<text transform="translate(420.9 302.4) rotate(-3) scale(0.42 1)" font-size="17.4" vector-effect="non-scaling-stroke">L</text>
</g>
<path d="M392.6 257.4 L396.8 263 M396.8 257.4 L392.6 263" stroke="#b9aeca" stroke-width="0.6" fill="none"/>
<!-- hair -->
<path d="M361.9 121.5 C362.4 119 363 117.4 364 116 C365 113.6 366.4 111.8 368 110.3 C369.6 109 371.2 108.2 373 107.5 C375.4 105.8 378 104.6 380.7 104 C384 102.8 387.2 102.4 390.4 102.7 L393.4 104.4 L396 105.5 L397.2 103 L398.8 103.4 L399.6 106 L402.3 109 C404.2 109.8 405.8 111 407.2 112.4 C409.2 113.6 410.8 115.4 412 117.3 C412.8 119 413.2 121 413.4 122.9 C413.6 125.8 413.2 128.6 412.7 131.2 L411.3 136.8 L408.5 141 L405 144.5 L401.6 148.7 L396 146.6 L390.4 143.1 L384.9 138.2 L382.8 135.4 L382 140.5 L377.2 135.4 L374 133.8 L370.9 131.2 L368 133 L365.3 132.6 L363.8 130 L363.2 127 C362.2 125.2 361.8 123.4 361.9 121.5 Z" fill="#beb29d"/>
<path d="M386 114 C389 110.6 394 110.6 396 114 C398.4 118 397.6 123 395 127 C393.6 129.4 392 131 390 132 C392 127 392.4 122 391 118 C390 115.6 388 114.4 386 114 Z" fill="#a39684"/>
<path d="M396 105.5 C399 109 399.6 114 398 118 C400 114 402.6 112 404 113 C405 118 404 124 401 129 C404 127 406.6 124 408 121 C409 126 408 132 405 137 C403 141 401 144 398 146.6 L396 146.6 C399 141 400 135 399 130 C397 134 394 138 390.4 143.1 L388 141 C392 135 395 128 395.6 121 C396 115 395.6 110 394 106 Z" fill="#ad9f8c" opacity="0.7"/>
<path d="M380 127 C381 125.6 383 126 383.6 128 C384.2 131 384 134 383.5 136.8 L382.4 136.6 C381.2 133.6 380.2 130.4 380 127 Z" fill="#f3dedb" stroke="#d3b0b2" stroke-width="0.35"/>
<path d="M366 113 C369 109.4 374 107 379 106.4 C375 109.6 372 114 371 119 C370.4 123 370.6 127 371.6 130.6 C368 127 365.6 122 365.2 117 Z" fill="#cbbfab" opacity="0.8"/>
<path d="M402.6 110.4 C406 112.4 409 116 410.4 120 C411.4 124 411 128.4 409.6 132 C409.4 126 407.6 120 404.6 116 Z" fill="#cbbfab" opacity="0.7"/>
<g fill="none" stroke="#8f8373" stroke-width="0.55" stroke-linecap="round">
<path d="M384 112 C388 108.6 394.6 109.4 397.4 114.6 C399.6 119.6 398 126 394 131"/>
<path d="M373 110 C370 116 369.4 123 371 130"/>
<path d="M377.5 107 C374.6 113 374.4 121 376.6 128"/>
<path d="M398 104 C400.6 108.4 400.6 113.6 398.8 118"/>
<path d="M407 114 C409 121 408 129 404.6 135.6"/>
<path d="M402 141 C400.6 144 399 146.4 397 148"/>
<path d="M389 102.6 L386.2 100.4"/>
<path d="M396.4 104.4 L394.6 101"/>
<path d="M399 104 L401.4 100.8"/>
<path d="M365 114 L362.4 112.6"/>
<path d="M362.4 121 L360 120.2"/>
<path d="M412.8 118 L415 116.4"/>
<path d="M413.4 125 L415.6 125.4"/>
<path d="M412 132 L414.4 133.6"/>
<path d="M370.6 108.4 L369 105.6"/>
</g>
</g>
<!-- red brush strokes -->
<g filter="url(#soft)">
<g opacity="0.58" mask="url(#slit)">
<g fill="none" stroke="#a3061f" stroke-width="27.6" stroke-linecap="round" stroke-linejoin="round">
<path d="M443.6 147 L443.7 147.1"/>
<path d="M445 255 L443.5 209 L436 165 L432.3 143 L440 148.5 L458 184 L468 204 L475 225 L478.6 250 L479.4 270 L479 291 L477 334 L481.5 379 L483 387.5"/>
<path d="M444.5 251 L427.5 286 L437.8 313 L448 340 L454 356 L450.5 372 L447.5 396 L448.5 402"/>
</g>
<path d="M444.5 251 L450 200 L460 190 L478 250 L479 291 L477 334 L481.5 379 L478 393 L466 393.5 L458 400 L450.5 372 L454 356 L448 340 L437.8 313 L427.5 286 Z" fill="#a3061f"/>
</g>
<g opacity="0.55">
<path d="M484.5 164 L487 200 L490.5 240 L493 269.5" fill="none" stroke="#a3061f" stroke-width="28.4" stroke-linecap="round" stroke-linejoin="round"/>
</g>
</g>
<path d="M428 189.6 L485.7 144.3 C484 200 476 290 469.4 342.5 L428 322.1" fill="none" stroke="#fbe6ea" stroke-width="1.3" stroke-linejoin="round" opacity="0.4"/>
</g>

<rect x="1.6" y="201.15" width="21.6" height="16.4" rx="0.5" fill="#323232"/>
<g fill="#4a4a4a"><rect x="6" y="57.5" width="13" height="1"/><rect x="6" y="59.5" width="13" height="1"/></g>
<g fill="#d4d4d4"><path d="M2.2 48.2 L4.6 50.1 L2.2 52 Z"/><path d="M5 48.2 L7.4 50.1 L5 52 Z"/></g>
<g transform="translate(11.6 77.00)"><g fill="#e2e2e2"><rect x="-4.6" y="-0.6" width="9.2" height="1.2"/><rect x="-0.6" y="-4.6" width="1.2" height="9.2"/>
<path d="M0 -5.8 L2.2 -3.2 L-2.2 -3.2 Z"/><path d="M0 5.8 L2.2 3.2 L-2.2 3.2 Z"/><path d="M-5.8 0 L-3.2 -2.2 L-3.2 2.2 Z"/><path d="M5.8 0 L3.2 -2.2 L3.2 2.2 Z"/></g></g>
<path d="M21.9 81.50 L21.9 84.30 L19.1 84.30 Z" fill="#cfcfcf"/>
<g transform="translate(12 95.55)"><rect x="-5.7" y="-4.8" width="11.4" height="9.6" fill="none" stroke="#e2e2e2" stroke-width="1.05" stroke-dasharray="2.6 1.3"/></g>
<path d="M21.9 100.45 L21.9 103.25 L19.1 103.25 Z" fill="#cfcfcf"/>
<g transform="translate(12.2 114.10)"><path d="M-5.6 -3.8 L-0.6 -0.8 L5.8 -5.6 L5.4 1.6 L0.4 2.4 L-2.2 4.2 L-4.6 4 L-1.4 1.6 Z" fill="none" stroke="#e2e2e2" stroke-width="1.1" stroke-linejoin="round"/>
<path d="M-1.4 1.6 L-3.6 5.6 M0.2 2.6 L-1.8 5.8" stroke="#e2e2e2" stroke-width="0.9" fill="none"/></g>
<path d="M21.9 119.40 L21.9 122.20 L19.1 122.20 Z" fill="#cfcfcf"/>
<g transform="translate(12.2 133.25)"><path d="M-6.4 4.8 L-4.6 6.6 L3 -1 L1.2 -2.8 Z" fill="#e2e2e2"/>
<g fill="#e2e2e2"><rect x="3.6" y="-6.6" width="1.1" height="3"/><rect x="2.7" y="-5.6" width="3" height="1.1"/>
<rect x="5.6" y="-2.2" width="1" height="2.4"/><rect x="4.9" y="-1.5" width="2.4" height="1"/>
<rect x="-0.8" y="-6.4" width="1" height="2.2"/><rect x="-1.4" y="-5.8" width="2.2" height="1"/></g></g>
<path d="M21.9 138.35 L21.9 141.15 L19.1 141.15 Z" fill="#cfcfcf"/>
<g transform="translate(11.6 152.20)"><g fill="none" stroke="#e2e2e2" stroke-width="1.5"><path d="M-3.2 -6.4 L-3.2 3.2 L6.4 3.2"/><path d="M-6.4 -3.2 L3.2 -3.2 L3.2 6.4"/></g></g>
<path d="M21.9 157.30 L21.9 160.10 L19.1 160.10 Z" fill="#cfcfcf"/>
<g transform="translate(12 171.75)"><path d="M-6 6 L-5.2 3.4 L0.2 -2 L2 -0.2 L-3.4 5.2 Z" fill="none" stroke="#e2e2e2" stroke-width="1"/>
<path d="M0.2 -3.6 L3.6 -0.2 L4.6 -1.2 L3.6 -2.2 L5.6 -4.2 C6.4 -5 6.4 -6 5.6 -6.6 C4.8 -7.2 4 -7 3.4 -6.4 L1.6 -4.4 L0.9 -5.1 Z" fill="#e2e2e2"/></g>
<path d="M21.9 176.25 L21.9 179.05 L19.1 179.05 Z" fill="#cfcfcf"/>
<g transform="translate(12.2 190.30)"><g transform="rotate(-45)"><rect x="-7.4" y="-3.3" width="14.8" height="6.6" rx="3" fill="#e2e2e2"/>
<g fill="#535353"><rect x="-2.4" y="-2.4" width="4.8" height="4.8"/></g>
<g fill="#e2e2e2"><circle cx="-1.2" cy="-1.2" r="0.6"/><circle cx="1.2" cy="-1.2" r="0.6"/><circle cx="-1.2" cy="1.2" r="0.6"/><circle cx="1.2" cy="1.2" r="0.6"/><circle cx="0" cy="0" r="0.6"/></g></g></g>
<path d="M21.9 195.20 L21.9 198.00 L19.1 198.00 Z" fill="#cfcfcf"/>
<g transform="translate(12.2 209.25)"><path d="M5.9 -6.3 C6.7 -5.9 6.7 -5.1 6.3 -4.5 L1.3 1.7 L-0.5 0.2 L4.5 -5.9 C4.9 -6.4 5.5 -6.5 5.9 -6.3 Z" fill="#e2e2e2"/>
<path d="M-1.1 0.8 L0.7 2.3 C0.4 4.1 -1.3 5.3 -3.3 5.5 C-4.3 5.6 -5.1 5.9 -5.6 6.2 C-4.5 4.9 -4.5 3.9 -4.1 2.7 C-3.6 1.4 -2.3 0.6 -1.1 0.8 Z" fill="#e2e2e2"/></g>
<path d="M21.9 214.15 L21.9 216.95 L19.1 216.95 Z" fill="#cfcfcf"/>
<g transform="translate(12.2 229.00)"><circle cx="0" cy="-3.8" r="2.7" fill="#e2e2e2"/><path d="M-1.5 -2 L1.5 -2 L2 0.6 L5.6 0.9 L5.6 3.2 L-5.6 3.2 L-5.6 0.9 L-2 0.6 Z" fill="#e2e2e2"/>
<rect x="-5.6" y="4.3" width="11.2" height="1.3" fill="#e2e2e2"/></g>
<path d="M21.9 233.10 L21.9 235.90 L19.1 235.90 Z" fill="#cfcfcf"/>
<g transform="translate(12.4 247.55)"><path d="M5.9 -6.3 C6.7 -5.9 6.7 -5.1 6.3 -4.5 L2.3 0.7 L0.5 -0.8 L4.5 -5.9 C4.9 -6.4 5.5 -6.5 5.9 -6.3 Z" fill="#e2e2e2"/>
<path d="M-0.1 -0.2 L1.7 1.3 C1.4 3.1 -0.3 4.3 -2.3 4.5 C-3.3 4.6 -4.1 4.9 -4.6 5.2 C-3.5 3.9 -3.5 2.9 -3.1 1.7 C-2.6 0.4 -1.3 -0.4 -0.1 -0.2 Z" fill="#e2e2e2"/>
<path d="M-6.4 -2.6 L-1.4 -3.8 L-3.2 -1.6 L-1 1 L-3 0.4 L-5.2 2 Z" fill="#e2e2e2"/>
<path d="M2.6 2.8 C3.6 4 3 5.8 1.6 6.4" fill="none" stroke="#e2e2e2" stroke-width="0.9"/></g>
<path d="M21.9 252.05 L21.9 254.85 L19.1 254.85 Z" fill="#cfcfcf"/>
<g transform="translate(12 266.50)"><path d="M-6 1.4 L0.6 -5.4 L5.6 -2.2 L-0.6 4.6 L-4.2 4.6 Z" fill="none" stroke="#e2e2e2" stroke-width="1.1" stroke-linejoin="round"/>
<path d="M0.6 -5.4 L5.6 -2.2 L2.6 1 L-2.4 -2.2 Z" fill="#e2e2e2"/>
<rect x="0.6" y="4.2" width="6" height="1" fill="#e2e2e2"/></g>
<path d="M21.9 271.00 L21.9 273.80 L19.1 273.80 Z" fill="#cfcfcf"/>
<g transform="translate(11.6 285.45)"><path d="M-5.6 -0.6 L0.2 -5 L5 1.2 L-0.8 5.6 C-1.8 6.2 -2.8 6 -3.4 5.2 L-6 1.6 C-6.4 0.8 -6.2 0 -5.6 -0.6 Z" fill="none" stroke="#e2e2e2" stroke-width="1.1" stroke-linejoin="round"/>
<path d="M-5.2 1.4 L4.4 1 L-0.8 5 C-1.8 5.6 -2.6 5.4 -3.2 4.8 Z" fill="#e2e2e2"/>
<path d="M-2.6 -6.6 C-0.6 -6 0.2 -4 0.2 -1.6" fill="none" stroke="#e2e2e2" stroke-width="0.9"/>
<path d="M5.8 2.4 C6.8 3.8 7 4.8 6.4 5.4 C5.8 6 5 5.8 4.8 5 C4.6 4.2 5.2 3.4 5.8 2.4 Z" fill="#e2e2e2"/></g>
<path d="M21.9 289.95 L21.9 292.75 L19.1 292.75 Z" fill="#cfcfcf"/>
<g transform="translate(11.8 304.40)"><path d="M0 -5.6 L4.9 4.9 L-4.9 4.9 Z" fill="#e2e2e2"/></g>
<path d="M21.9 308.90 L21.9 311.70 L19.1 311.70 Z" fill="#cfcfcf"/>
<g transform="translate(12 323.35)"><circle cx="1.8" cy="-1.8" r="3.9" fill="#e2e2e2"/><path d="M-1.2 1.2 L-5.6 5.4" stroke="#e2e2e2" stroke-width="1.8" stroke-linecap="round"/></g>
<path d="M21.9 327.85 L21.9 330.65 L19.1 330.65 Z" fill="#cfcfcf"/>
<g transform="translate(12 342.30)"><path d="M-5.8 6 L-4.4 -0.6 L0.6 -3.6 L4.4 0.2 L1.4 5 Z" fill="none" stroke="#e2e2e2" stroke-width="1.1" stroke-linejoin="round"/>
<path d="M-5.4 5.6 L-1.6 1.8" stroke="#e2e2e2" stroke-width="0.9"/><circle cx="-1" cy="1.2" r="1.1" fill="#e2e2e2"/>
<path d="M1.2 -5 L6 -0.2 L5 0.8 L0.2 -4 Z" fill="#e2e2e2"/></g>
<path d="M21.9 346.80 L21.9 349.60 L19.1 349.60 Z" fill="#cfcfcf"/>
<g transform="translate(12.5 361.65)"><path d="M-4.5 -5.2 L4.5 -5.2 L4.5 -2.6 L3.7 -2.6 L3.4 -4 L0.8 -4 L0.8 4.4 L2.3 4.7 L2.3 5.4 L-2.3 5.4 L-2.3 4.7 L-0.8 4.4 L-0.8 -4 L-3.4 -4 L-3.7 -2.6 L-4.5 -2.6 Z" fill="#e2e2e2"/></g>
<path d="M21.9 365.75 L21.9 368.55 L19.1 368.55 Z" fill="#cfcfcf"/>
<g transform="translate(12 380.20)"><path d="M-3.4 -6.4 L-3.4 5.2 L-0.6 2.6 L1.4 6.6 L3 5.8 L1 2 L4.8 1.8 Z" fill="#e2e2e2"/></g>
<path d="M21.9 384.70 L21.9 387.50 L19.1 387.50 Z" fill="#cfcfcf"/>
<g transform="translate(12 399.15)"><path d="M-2.8 -5.6 C-1.4 -6.4 -0.6 -5 0.2 -3.6 C1.6 -4.8 3.4 -6.2 4.8 -5 C6 -3.8 4.6 -2.2 3.4 -1.2 C5 -0.6 6.8 0.4 6 2 C5.2 3.4 3.2 2.6 1.8 2 C1.8 3.8 1.6 5.8 -0.2 5.8 C-1.8 5.8 -2 3.8 -2 2.4 C-3.4 3.4 -5.4 4.4 -6.4 3 C-7.2 1.6 -5.4 0.4 -4 -0.4 C-5.2 -1.4 -6 -2.6 -5.2 -3.6 C-4.4 -4.4 -3.4 -3.8 -2.6 -3.2 C-3.2 -4.2 -3.6 -5 -2.8 -5.6 Z" fill="#9c9c9c" stroke="#e2e2e2" stroke-width="1.1" stroke-linejoin="round"/>
<path d="M-2 -3 L1 -2.4 L3.6 -3.6 L3 -0.8 L4.6 1 L1.2 1 L0.2 4.2 L-1.2 1.4 L-4.6 2 L-3 -0.6 Z" fill="#e2e2e2" opacity="0"/></g>
<path d="M21.9 403.65 L21.9 406.45 L19.1 406.45 Z" fill="#cfcfcf"/>
<g transform="translate(12.4 418.70)"><path d="M-2.6 6.2 C-3.4 4.6 -5.2 2.6 -6.4 1 C-7 0 -5.8 -1 -4.8 0 L-3.2 1.8 L-4.4 -3.4 C-4.6 -4.6 -3 -5 -2.7 -3.8 L-1.6 -0.4 L-1.7 -5 C-1.7 -6.2 -0.1 -6.2 -0.1 -5 L0.3 -0.6 L1.5 -4.6 C1.8 -5.7 3.3 -5.3 3.1 -4.2 L2.3 0 L4.1 -2.8 C4.7 -3.8 6 -3 5.5 -2 L3.9 1.8 C4 3.6 3.9 5 3.3 6.2 Z" fill="#e2e2e2"/></g>
<path d="M21.9 422.60 L21.9 425.40 L19.1 425.40 Z" fill="#cfcfcf"/>
<g transform="translate(12 437.05)"><circle cx="-1.4" cy="-1.6" r="4.3" fill="none" stroke="#e2e2e2" stroke-width="1.3"/><path d="M1.8 1.8 L6 6" stroke="#e2e2e2" stroke-width="2" stroke-linecap="round"/></g>
<g transform="translate(12 457.00)"><g fill="#e2e2e2"><circle cx="-4.6" cy="0" r="1.45"/><circle cx="0" cy="0" r="1.45"/><circle cx="4.6" cy="0" r="1.45"/></g></g>
<path d="M21.9 460.50 L21.9 463.30 L19.1 463.30 Z" fill="#cfcfcf"/>
<rect x="4.2" y="473.6" width="4.8" height="4.8" fill="#ffffff"/><rect x="1.2" y="470.6" width="4.8" height="4.8" fill="#000" stroke="#e8e8e8" stroke-width="0.8"/>
<g fill="none" stroke="#e2e2e2" stroke-width="1"><path d="M16 472.4 L20.4 472.4 L20.4 476.6"/></g><path d="M14 472.4 L16.8 470.4 L16.8 474.4 Z" fill="#e2e2e2"/><path d="M20.4 478.6 L18.4 475.8 L22.4 475.8 Z" fill="#e2e2e2"/>
<rect x="8.6" y="490" width="13.6" height="13.2" fill="#ffffff" stroke="#8a8a8a" stroke-width="0.5"/>
<rect x="1.6" y="482.4" width="13.6" height="13.4" fill="#e8e8e8"/><rect x="2.6" y="483.4" width="11.6" height="11.4" fill="#a4001b"/>
<rect x="5.2" y="512" width="12.6" height="9.2" fill="none" stroke="#e2e2e2" stroke-width="1"/><circle cx="11.5" cy="516.6" r="2.9" fill="none" stroke="#e2e2e2" stroke-width="0.8" stroke-dasharray="1.2 0.8"/>
<rect x="8.8" y="531" width="9.4" height="1.2" fill="#e8e8e8"/>
</svg>
<div id="status" class="abs"><div style="position:absolute;left:34.5px;top:0;width:134px;height:12px;background:#595959"></div><span style="position:absolute;left:3px;top:0;font-size:8.6px;line-height:12px;color:#e4e4e4">66.67%</span><svg style="position:absolute;left:160px;top:0" width="8" height="12" viewBox="0 0 8 12"><polyline points="2.2,2.6 5,6.2 2.2,9.8" fill="none" stroke="#c0c0c0" stroke-width="1"/></svg></div>
<div id="bottom" class="abs"><div style="position:absolute;left:286px;top:0;width:35px;height:6px;background:#45434c"></div><div style="position:absolute;left:321px;top:0;width:117px;height:6px;background:#1d1727"></div><div style="position:absolute;left:438px;top:0;width:316px;height:6px;background:#17151a"></div></div>
</body></html>
